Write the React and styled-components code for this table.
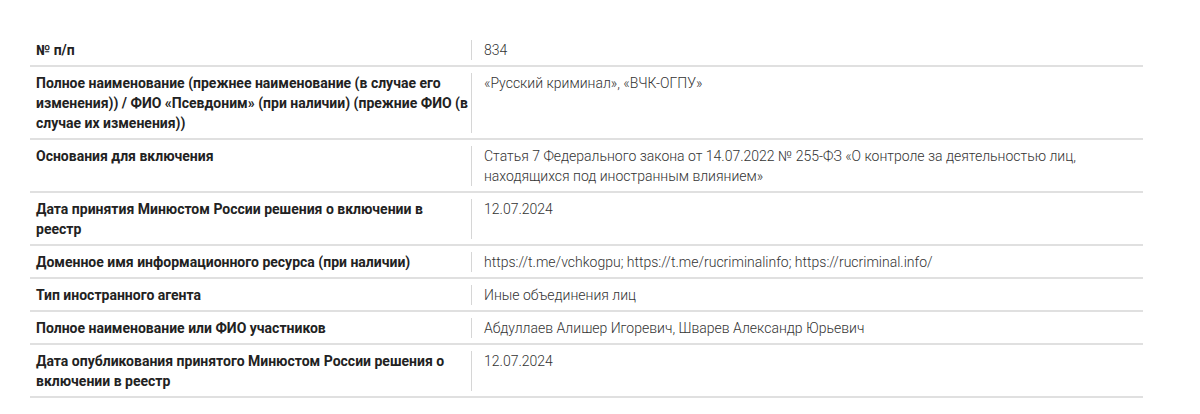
import styled, { createGlobalStyle } from "styled-components";

const GlobalStyle = createGlobalStyle`
  html, body {
    margin: 0;
    padding: 0;
    background: #ffffff;
  }
  body {
    font-family: Roboto, "Noto Sans", "Liberation Sans", sans-serif;
  }
`;

const Page = styled.div`
  padding: 34px 0 0 30px;
`;

const Table = styled.div`
  width: 1113px;
  display: flex;
  flex-direction: column;
`;

const Row = styled.div`
  display: grid;
  grid-template-columns: 441px 1fr;
  border-bottom: 2px solid #e0e0e0;
`;

const Label = styled.div`
  padding: 6px 0 5px 6px;
  font-size: 14px;
  line-height: 20px;
  font-weight: 700;
  color: #222222;
`;

const Value = styled.div`
  margin: 6px 0 5px;
  padding: 0 12px;
  border-left: 1px solid #d6d6d6;
  font-size: 14px;
  line-height: 20px;
  font-weight: 300;
  color: #333333;
`;

const rows = [
  ["№ п/п", "834"],
  [
    "Полное наименование (прежнее наименование (в случае его изменения)) / ФИО «Псевдоним» (при наличии) (прежние ФИО (в случае их изменения))",
    "«Русский криминал», «ВЧК-ОГПУ»",
  ],
  [
    "Основания для включения",
    "Статья 7 Федерального закона от 14.07.2022 № 255-ФЗ «О контроле за деятельностью лиц, находящихся под иностранным влиянием»",
  ],
  [
    "Дата принятия Минюстом России решения о включении в реестр",
    "12.07.2024",
  ],
  [
    "Доменное имя информационного ресурса (при наличии)",
    "https://t.me/vchkogpu; https://t.me/rucriminalinfo; https://rucriminal.info/",
  ],
  ["Тип иностранного агента", "Иные объединения лиц"],
  [
    "Полное наименование или ФИО участников",
    "Абдуллаев Алишер Игоревич, Шварев Александр Юрьевич",
  ],
  [
    "Дата опубликования принятого Минюстом России решения о включении в реестр",
    "12.07.2024",
  ],
];

function App() {
  return (
    <Page>
      <GlobalStyle />
      <Table>
        {rows.map(([label, value]) => (
          <Row key={label}>
            <Label>{label}</Label>
            <Value>{value}</Value>
          </Row>
        ))}
      </Table>
    </Page>
  );
}

export default App;
